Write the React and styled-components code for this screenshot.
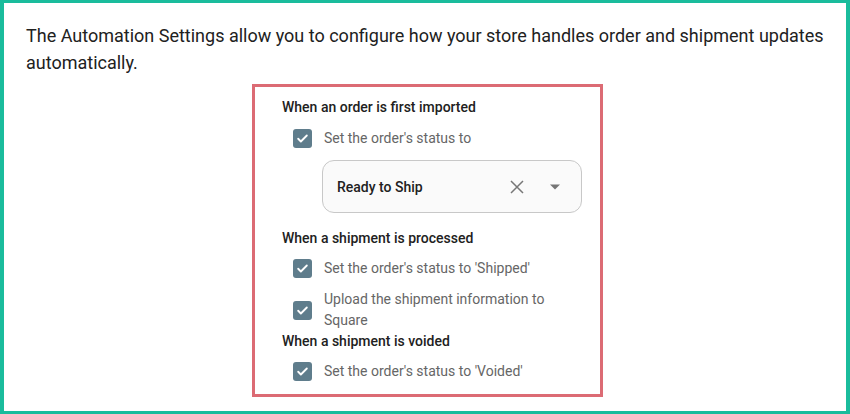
import React from "react";
import styled, { createGlobalStyle } from "styled-components";

const GlobalStyle = createGlobalStyle`
  html, body {
    margin: 0;
    padding: 0;
    background: #fff;
  }
  body {
    font-family: Roboto, "Liberation Sans", Arial, sans-serif;
  }
`

const StyledPage = styled.div`
  box-sizing: border-box;
  width: 850px;
  height: 414px;
  border: 3px solid #1abc9c;
  border-left-width: 4px;
  border-right-width: 4px;
  padding: 19px 22px 0;
`

const StyledIntro = styled.p`
  margin: 0 0 8px;
  font-size: 18px;
  line-height: 27px;
  color: #212121;
`

const StyledPanel = styled.div`
  box-sizing: border-box;
  width: 351px;
  margin: 0 0 0 226px;
  border: 3px solid #dc6b74;
  padding: 10px 20px 8px 27px;
`

const StyledHeading = styled.div`
  font-size: 14px;
  line-height: 20px;
  font-weight: 500;
  color: #212121;
  margin-top: ${props => props.gap || 0}px;
`

const StyledRow = styled.label`
  display: flex;
  align-items: center;
  gap: 12px;
  min-height: 30px;
  margin-top: ${props => props.gap || 5}px;
  padding-left: 11px;
  font-size: 14px;
  line-height: 21px;
  color: #666;
`

const StyledBox = styled.span`
  flex: none;
  width: 19px;
  height: 19px;
  border-radius: 3px;
  background: #5f7d8c;
  display: flex;
  align-items: center;
  justify-content: center;
`

const StyledSelect = styled.div`
  box-sizing: border-box;
  display: flex;
  align-items: center;
  width: 260px;
  height: 53px;
  margin: 7px 0 15px 40px;
  padding: 0 20px 0 14px;
  border: 1px solid #c8c8c8;
  border-radius: 12px;
  background: #fafafa;
`

const StyledValue = styled.span`
  flex: 1;
  font-size: 14px;
  font-weight: 500;
  color: #212121;
`

const StyledIconButton = styled.span`
  display: flex;
  align-items: center;
  justify-content: center;
  margin-left: ${props => props.gap || 0}px;
`

function Checkbox() {
    return (
        <StyledBox>
            <svg width="13" height="13" viewBox="0 0 24 24">
                <path d="M4 12.5l5 5L20 6.5" fill="none" stroke="#fff" strokeWidth="3.4"
                      strokeLinecap="round" strokeLinejoin="round"/>
            </svg>
        </StyledBox>
    )
}

function Option({children, gap}) {
    return (
        <StyledRow gap={gap}>
            <Checkbox/>
            <span>{children}</span>
        </StyledRow>
    )
}

function StatusSelect({value}) {
    return (
        <StyledSelect>
            <StyledValue>{value}</StyledValue>
            <StyledIconButton>
                <svg width="16" height="16" viewBox="0 0 16 16">
                    <path d="M2 2L14 14M14 2L2 14" stroke="#777" strokeWidth="1.5" fill="none"/>
                </svg>
            </StyledIconButton>
            <StyledIconButton gap={24}>
                <svg width="12" height="6" viewBox="0 0 12 6">
                    <path d="M1 0.5h10L6 5.5z" fill="#757575"/>
                </svg>
            </StyledIconButton>
        </StyledSelect>
    )
}

function App() {
    return (
        <>
            <GlobalStyle/>
            <StyledPage>
                <StyledIntro>
                    The Automation Settings allow you to configure how your store handles order and shipment updates
                    automatically.
                </StyledIntro>
                <StyledPanel>
                    <StyledHeading>When an order is first imported</StyledHeading>
                    <Option gap={6}>Set the order's status to</Option>
                    <StatusSelect value="Ready to Ship"/>
                    <StyledHeading>When a shipment is processed</StyledHeading>
                    <Option>Set the order's status to 'Shipped'</Option>
                    <Option gap={6}>Upload the shipment information to Square</Option>
                    <StyledHeading>When a shipment is voided</StyledHeading>
                    <Option>Set the order's status to 'Voided'</Option>
                </StyledPanel>
            </StyledPage>
        </>
    )
}

export default App
